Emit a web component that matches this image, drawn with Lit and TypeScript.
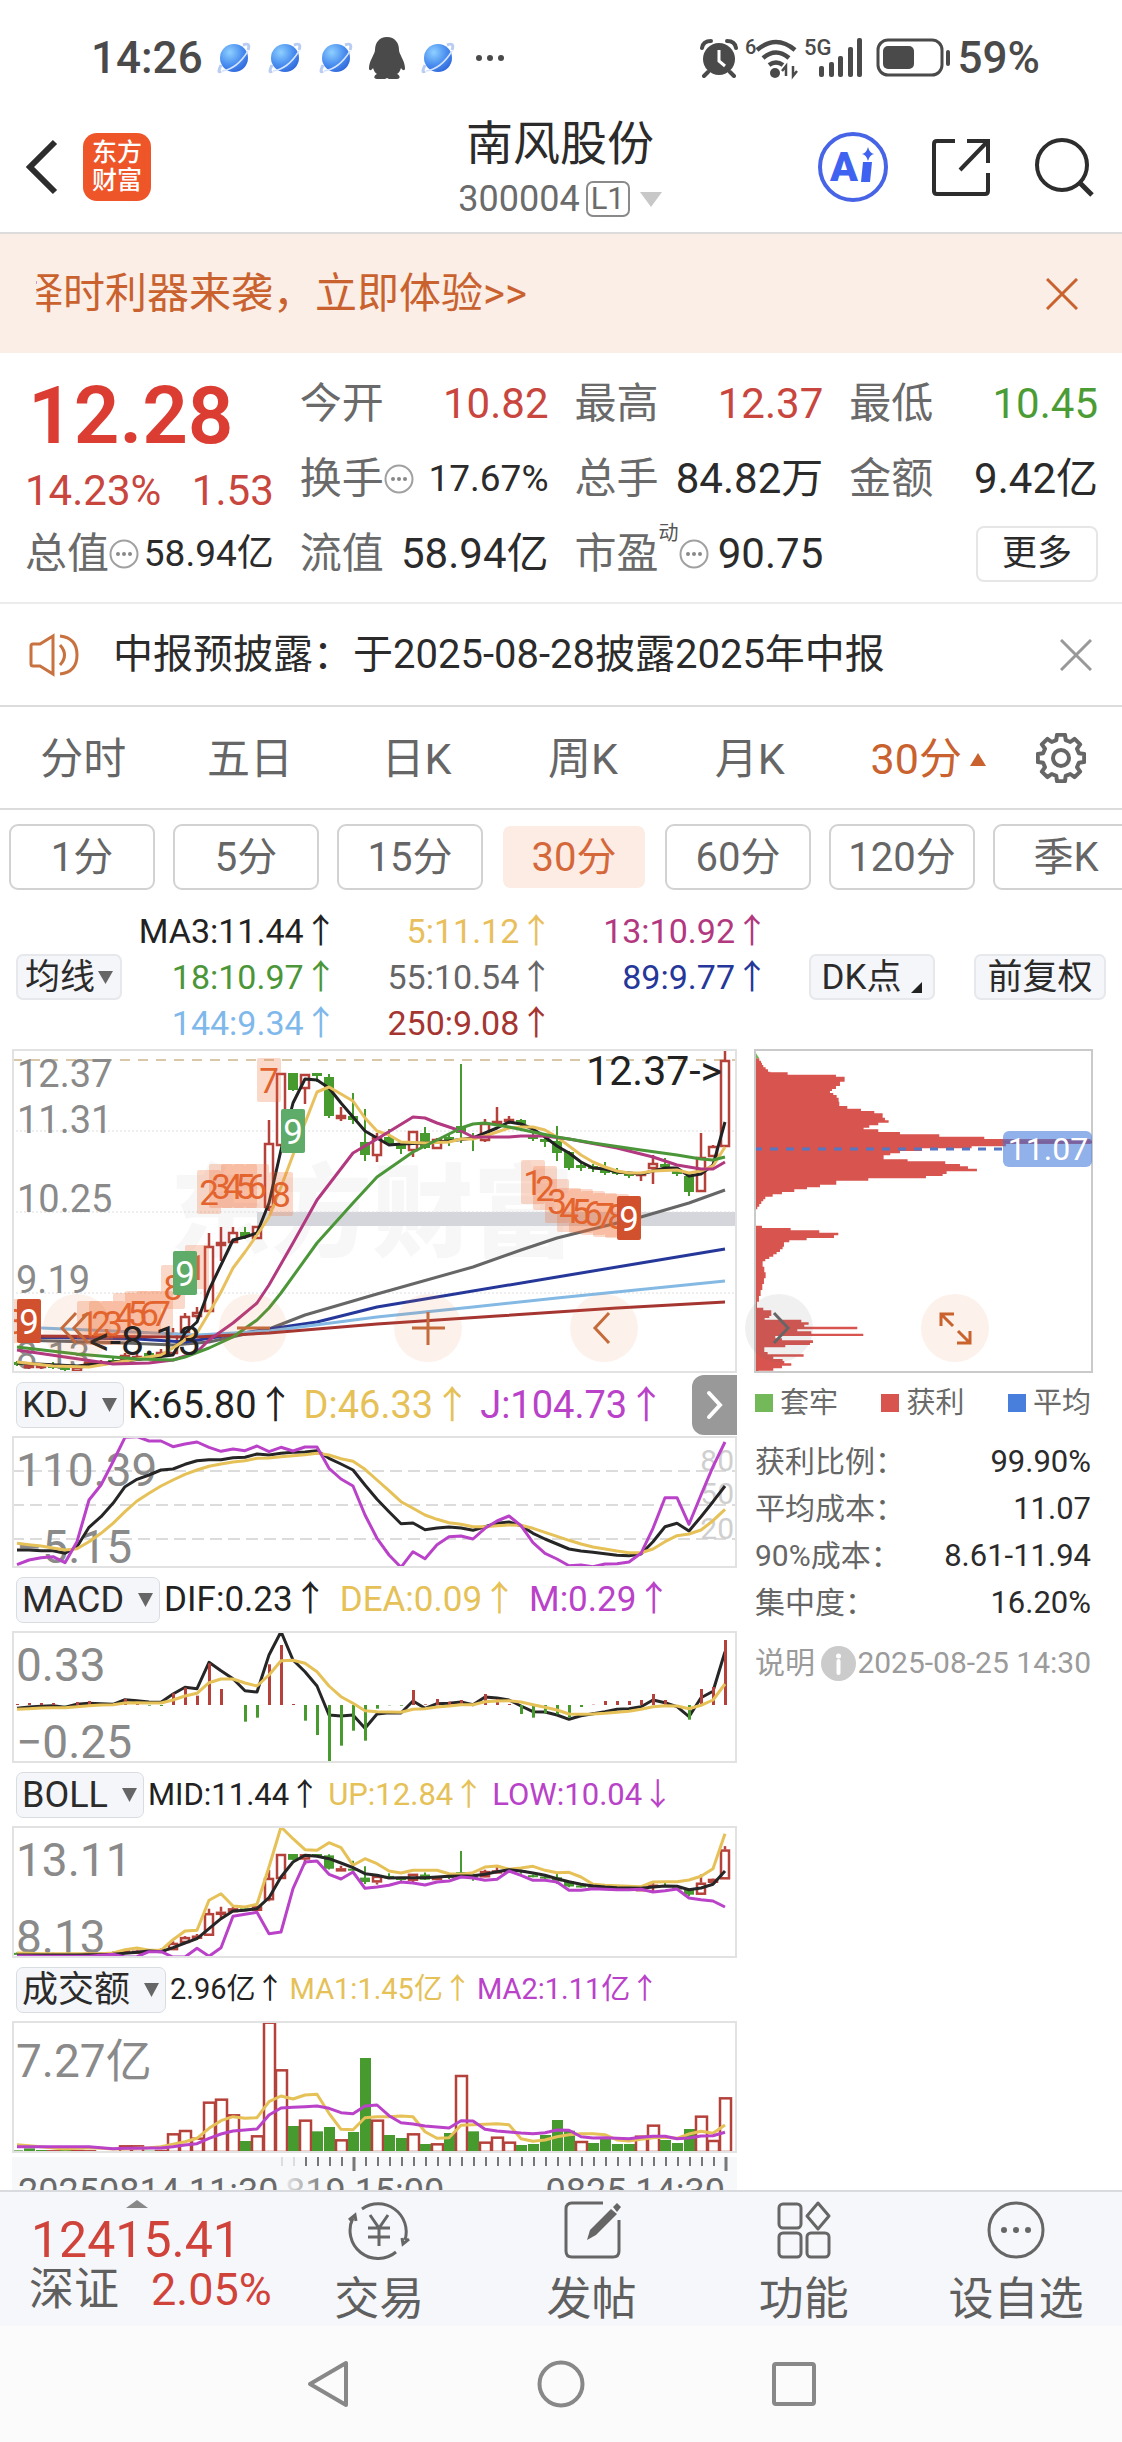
import { LitElement, html, svg, css } from "lit";
import { customElement, property } from "lit/decorators.js";
import { classMap } from "lit/directives/class-map.js";

/* ---------- market data, one entry per 30-minute bar ---------- */

type Candle = [kind: "r" | "g", high: number, top: number, bottom: number, low: number];

const STEP = 12;
const FIRST = 5;
const barX = (i: number) => FIRST + i * STEP;

const candles: Candle[] = [
  ["g", 312, 313, 316, 317], ["r", 315, 316, 319, 320], ["r", 315, 316, 319, 320], ["g", 313, 316, 319, 320],
  ["g", 317, 318, 321, 322], ["r", 316, 318, 323, 324], ["r", 311, 313, 316, 317], ["r", 311, 313, 316, 317],
  ["g", 309, 311, 313, 315], ["r", 304, 306, 311, 312], ["r", 304, 307, 311, 312], ["g", 303, 304, 308, 309],
  ["r", 300, 303, 307, 308], ["r", 279, 284, 305, 305], ["r", 264, 267, 284, 284], ["r", 258, 263, 268, 270],
  ["r", 184, 197, 263, 263], ["r", 178, 193, 197, 212], ["r", 178, 183, 194, 194], ["g", 178, 183, 188, 190],
  ["r", 177, 177, 190, 190], ["r", 71, 94, 159, 162], ["r", 24, 24, 97, 97], ["g", 24, 24, 41, 42],
  ["r", 25, 25, 40, 55], ["g", 24, 24, 27, 33], ["g", 25, 28, 67, 69], ["r", 58, 66, 70, 72],
  ["g", 44, 67, 71, 75], ["g", 60, 93, 106, 112], ["r", 84, 88, 107, 113], ["g", 80, 88, 95, 96],
  ["g", 93, 94, 100, 105], ["r", 82, 82, 102, 108], ["g", 78, 84, 99, 100], ["r", 89, 90, 100, 100],
  ["g", 86, 88, 91, 97], ["g", 15, 77, 84, 94], ["g", 84, 88, 90, 102], ["r", 70, 74, 92, 93],
  ["r", 58, 72, 75, 75], ["r", 67, 70, 73, 75], ["g", 70, 71, 75, 82], ["g", 84, 86, 90, 92],
  ["g", 88, 90, 93, 98], ["g", 77, 92, 104, 112], ["g", 102, 103, 119, 121], ["g", 112, 116, 119, 122],
  ["g", 115, 117, 120, 123], ["g", 113, 120, 124, 126], ["g", 119, 122, 125, 126], ["g", 123, 124, 127, 129],
  ["r", 123, 124, 126, 132], ["r", 106, 114, 120, 135], ["g", 109, 115, 118, 120], ["g", 120, 122, 125, 127],
  ["g", 125, 127, 143, 147], ["r", 84, 108, 143, 143], ["r", 96, 97, 108, 108], ["r", 1, 11, 98, 98],
];

/* Sparse series: bar index followed by its y coordinate. */
const maLines: { color: string; points: number[] }[] = [
  { color: "#666666", points: [0,291, 9,294, 13,296, 16,293, 21,280, 24,266, 30,245, 38,218, 42,201, 45,189, 50,174, 52,168, 56,154, 59,141] },
  { color: "#26379a", points: [0,288, 10,290, 14,293, 21,280, 25,273, 30,258, 36,246, 45,228, 52,214, 57,204, 59,200] },
  { color: "#84b9e4", points: [0,278, 8,282, 15,286, 21,282, 30,268, 38,258, 45,249, 59,232] },
  { color: "#a53531", points: [0,287, 15,288, 21,284, 30,275, 40,267, 50,259, 59,253] },
  { color: "#222222", points: [0,314, 5,317, 9,312, 13,306, 14,284, 15,273, 16,241, 17,216, 18,191, 19,188, 20,184, 21,154, 22,101, 23,54, 24,30, 25,31, 26,39, 27,54, 28,68, 29,82, 30,89, 31,96, 32,95, 34,94, 36,92, 38,89, 39,84, 40,79, 41,73, 42,75, 43,80, 44,88, 45,97, 46,104, 47,113, 48,119, 49,120, 50,123, 51,124, 52,125, 53,122, 54,119, 55,119, 56,127, 57,125, 58,116, 59,73] },
  { color: "#e8c05e", points: [0,313, 3,317, 6,318, 9,312, 12,306, 13,299, 14,291, 15,284, 16,264, 17,243, 18,219, 19,203, 20,186, 21,168, 22,138, 23,106, 24,74, 25,43, 26,38, 27,45, 28,52, 29,69, 30,82, 31,86, 32,93, 34,94, 36,93, 37,90, 38,90, 39,87, 40,83, 41,79, 42,78, 43,78, 44,81, 45,88, 46,97, 47,106, 48,113, 49,118, 50,122, 51,124, 52,124, 53,122, 55,121, 56,124, 57,122, 58,117, 59,98] },
  { color: "#b2387f", points: [0,301, 4,308, 8,315, 11,314, 13,311, 15,303, 16,291, 18,274, 20,254, 21,236, 23,194, 25,151, 28,104, 30,90, 33,68, 34,69, 35,74, 37,82, 38,88, 40,88, 41,88, 42,87, 44,87, 46,90, 50,99, 53,108, 55,116, 57,120, 58,120, 59,113] },
  { color: "#4b9638", points: [0,298, 5,305, 10,310, 13,311, 14,308, 16,299, 18,288, 20,271, 21,259, 22,244, 25,194, 28,154, 30,128, 33,103, 37,79, 38,75, 39,74, 41,78, 43,83, 45,88, 48,94, 52,101, 55,106, 57,110, 58,111, 59,108] },
];

/* Dense series are kept in thirds of a pixel, counted from each panel's own top value. */
const kdj = {
  top: 198,
  k: [540,540,542,542,550,530,472,440,400,350,328,315,300,297,283,272,269,269,263,262,252,255,250,247,246,242,265,282,300,345,388,425,461,459,479,474,471,474,481,470,460,456,467,490,507,522,537,543,547,551,556,557,552,515,470,460,483,440,395,348],
  d: [520,524,528,534,540,536,515,490,460,425,393,370,348,330,313,300,289,282,276,272,265,264,260,257,254,250,255,266,274,298,330,362,395,415,435,448,458,463,470,470,467,465,466,475,487,499,511,522,531,537,543,548,548,537,515,497,492,480,452,418],
  j: [584,570,563,560,578,515,390,345,275,202,200,213,213,230,222,216,232,244,237,242,228,245,232,243,231,231,295,327,348,435,505,555,592,545,566,524,500,498,507,475,453,438,467,518,550,567,587,585,590,582,581,576,550,475,383,383,463,375,290,216],
};

const macd = {
  top: 93,
  dif: [325,321,319,317,322,313,310,311,313,299,302,306,307,282,262,266,187,212,236,272,276,165,95,180,215,258,345,348,345,385,342,338,339,303,325,311,310,306,314,291,294,300,318,335,336,345,358,347,341,335,328,326,320,300,308,320,350,293,274,155],
  dea: [328,326,324,323,323,320,317,315,314,309,308,309,309,300,288,280,248,237,237,249,258,225,182,181,190,215,258,290,310,332,335,336,337,328,326,321,318,314,314,305,303,302,306,314,322,330,342,343,342,340,337,334,328,320,317,318,326,316,300,252],
  bars: [3,6,6,6,-1,9,12,3,1,18,10,-2,-3,35,52,28,125,48,0,-50,-38,122,180,3,-47,-90,-172,-122,-77,-107,-11,-1,-2,45,2,18,10,15,2,33,18,3,-27,-38,-25,-28,-38,-6,1,12,12,12,15,33,15,0,-44,48,54,195],
};

const boll = {
  top: 47,
  up: [428,429,430,430,430,430,430,430,428,418,413,420,420,388,362,360,270,250,287,290,282,170,50,85,118,120,97,112,165,145,160,182,188,180,180,180,190,192,187,170,167,177,173,168,180,187,186,200,222,225,226,228,229,215,214,214,209,198,175,70],
  mid: [434,434,434,434,434,434,433,433,432,429,426,422,424,412,398,385,355,325,302,300,295,262,200,155,135,138,145,158,172,190,195,203,202,202,202,200,198,197,196,192,184,178,182,188,195,205,214,222,227,230,232,233,234,230,227,228,238,233,222,182],
  low: [437,437,438,438,438,438,438,435,432,440,439,424,424,440,440,414,438,412,318,312,306,370,365,235,155,152,192,206,185,234,230,225,215,218,224,215,212,200,203,210,207,182,195,210,210,215,240,240,235,237,238,238,237,245,241,236,263,268,272,290],
};

const turnover = {
  top: 153,
  kinds: "gggrgrrggrrgrrrrrrrgrrrgrggrggrggrgrgrgrrrgggggrggggrrgggrrr",
  bars: [541,535,540,541,540,540,541,544,544,526,526,542,540,490,480,503,395,386,433,513,496,155,298,468,449,484,471,508,486,264,449,495,504,490,522,520,489,315,484,515,500,515,525,522,495,450,482,513,519,505,522,522,497,464,510,519,477,437,510,382],
  ma1: [524,527,530,534,537,535,533,535,537,536,535,533,530,523,515,505,475,452,440,445,443,395,378,387,375,373,430,478,479,443,440,440,438,440,485,505,503,466,464,463,461,464,506,514,510,500,494,491,491,494,510,513,508,503,502,505,492,484,490,465],
  ma2: [530,530,530,530,530,530,530,533,536,535,535,534,534,530,525,521,505,492,483,480,477,435,414,412,410,408,415,428,431,408,405,437,458,462,468,471,474,452,453,478,483,486,489,491,488,480,481,500,504,503,505,506,502,499,499,506,504,498,497,487],
};

/* Nine-turn counters: digit, left, top, style. */
const turns: [string, number, number, string][] = [
  ["8", -9, 250, "soft"], ["1", 65, 252, "soft"], ["2", 77, 252, "soft"], ["3", 89, 252, "soft"],
  ["4", 101, 244, "soft"], ["5", 113, 242, "soft"], ["6", 125, 242, "soft"], ["7", 137, 242, "soft"],
  ["8", 149, 216, "soft"], ["1", 173, 196, "soft"], ["9", 161, 202, "green"],
  ["2", 185, 121, "soft"], ["3", 197, 115, "soft"], ["4", 209, 115, "soft"], ["5", 221, 115, "soft"],
  ["6", 233, 115, "soft"], ["8", 257, 123, "soft"], ["7", 245, 9, "soft"], ["9", 269, 60, "green"],
  ["1", 509, 111, "soft"], ["2", 521, 117, "soft"], ["3", 533, 130, "soft"], ["4", 545, 139, "soft"],
  ["5", 557, 140, "soft"], ["6", 569, 142, "soft"], ["7", 581, 144, "soft"], ["8", 593, 145, "soft"],
  ["9", 605, 147, "red"], ["9", 5, 250, "red"],
];

/* Cost distribution, pairs of y and right edge in thirds of a pixel. */
const chips = [55,60, 62,65, 68,68, 75,72, 82,79, 88,86, 95,93, 97,145, 104,290, 110,316, 125,302, 138,290, 147,278, 153,272, 159,282, 165,292, 173,298, 185,300, 198,324, 206,365, 213,405, 220,430, 233,437, 241,448, 248,417, 256,390, 263,373, 268,417, 276,482, 283,600, 290,735, 297,1054, 312,800, 319,697, 325,548, 333,482, 340,453, 346,433, 358,505, 364,618, 372,662, 379,686, 386,713, 394,622, 402,610, 408,560, 415,387, 422,291, 434,242, 442,203, 448,165, 456,128, 463,100, 470,78, 478,72, 484,66, 492,60, 500,54, 508,48, 516,44, 557,68, 564,154, 571,240, 578,297, 586,284, 594,202, 601,150, 607,134, 620,130, 628,122, 636,112, 643,102, 650,90, 657,78, 664,70, 680,75, 697,79, 715,74, 732,69, 750,64, 768,59, 785,53, 803,72, 811,96, 828,90, 834,76, 839,186, 847,208, 854,195, 860,354, 868,174, 874,216, 881,372, 888,108, 895,128, 901,221, 909,212, 915,138, 922,75, 936,85, 943,193, 950,102, 957,130, 963,135, 970,156, 977,128, 985,102, 992,58, 999,44];

/* ---------- drawing helpers ---------- */

const sparse = (p: number[]) => {
  const out: string[] = [];
  for (let n = 0; n < p.length; n += 2) out.push(`${barX(p[n])},${p[n + 1]}`);
  return out.join(" ");
};
const dense = (v: number[], top: number) => v.map((y, i) => `${barX(i)},${((y - top) / 3).toFixed(1)}`).join(" ");
const chipPath = () => {
  let d = "M44 55";
  for (let n = 0; n < chips.length; n += 2) d += `V${chips[n]}H${chips[n + 1]}`;
  return d + "V1000H44Z";
};

const RED = "#b5413b";
const GREEN = "#469a2e";

const drawCandles = (scale = (y: number) => y, half = 5) =>
  candles.map(([kind, high, top, bottom, low], i) => {
    const x = barX(i);
    const t = scale(top);
    const b = scale(bottom);
    return kind === "g"
      ? svg`<path d="M${x} ${scale(high)}V${scale(low)}" stroke=${GREEN} stroke-width="2"/><rect x=${x - half} y=${t} width=${half * 2} height=${Math.max(b - t, 2)} fill=${GREEN}/>`
      : svg`<path d="M${x} ${scale(high)}V${t}M${x} ${b}V${scale(low)}" stroke=${RED} stroke-width="2.500"/><rect x=${x - half + 1} y=${t + 1} width=${half * 2 - 2} height=${Math.max(b - t - 2, 1)} fill="#fff" stroke=${RED} stroke-width="2.500"/>`;
  });

const line = (points: string, color: string, width = 3) =>
  svg`<polyline points=${points} fill="none" stroke=${color} stroke-width=${width} stroke-linejoin="round"/>`;

const gearPath = () => {
  const pts: string[] = [];
  for (let t = 0; t < 8; t++) {
    const mid = (t * Math.PI) / 4;
    for (const [off, r] of [[-0.26, 18.5], [-0.17, 23.5], [0.17, 23.5], [0.26, 18.5]]) {
      pts.push(`${(25 + r * Math.sin(mid + off)).toFixed(2)} ${(25 - r * Math.cos(mid + off)).toFixed(2)}`);
    }
  }
  return `M${pts.join("L")}Z`;
};

const sharedText = css`
  * { box-sizing: border-box; }
  :host { display: block; font-family: Roboto, "Noto Sans CJK SC", sans-serif; line-height: 1; color: #2b2b2b; }
  button { font: inherit; color: inherit; background: none; border: 0; padding: 0; margin: 0; cursor: pointer; }
  svg { display: block; }
`;

/* ---------- device status bar ---------- */

@customElement("status-bar")
class StatusBar extends LitElement {
  static styles = [sharedText, css`
    .bar { display: flex; justify-content: space-between; height: 116px; padding: 0 82px 0 91px; color: #4a4a4a; font-size: 44px; font-weight: 500; }
    .group { display: flex; align-items: center; gap: 5px; }
    .apps { display: flex; align-items: center; gap: 15px; margin-left: 8px; }
    .more { margin-left: 4px; }
    .signal { margin-right: 4px; }
  `];
  planet() {
    return html`<svg width="36" height="34" viewBox="0 0 36 34" aria-hidden="true">
      <defs><radialGradient id="p" cx=".35" cy=".3" r=".8"><stop offset="0" stop-color="#8fd0ff"/><stop offset=".55" stop-color="#4b90f0"/><stop offset="1" stop-color="#2c62d8"/></radialGradient></defs>
      <path d="M5 30Q1 33 5 24M27 4Q35 1 32 9" fill="none" stroke="#b9ccf2" stroke-width="3"/>
      <circle cx="18" cy="17" r="14" fill="url(#p)"/>
      <path d="M6 30Q21 28 32 10" fill="none" stroke="#d5e4ff" stroke-width="1.500"/>
    </svg>`;
  }
  render() {
    return html`<div class="bar">
      <div class="group">
        <span>14:26</span>
        <div class="apps">
          ${[0, 1, 2].map(() => this.planet())}
          <svg width="36" height="42" viewBox="0 0 36 42" aria-hidden="true"><path fill="#4a4a4a" d="M18 0c-8 0-12 6-12 13 0 4-6 11-6 18 0 3 2 3 4 0 1 3 2 5 4 6-3 1-4 5 0 5h8l2-1 2 1h8c4 0 3-4 0-5 2-1 3-3 4-6 2 3 4 3 4 0 0-7-6-14-6-18C30 6 26 0 18 0Z"/></svg>
          ${this.planet()}
          <svg class="more" width="30" height="8" viewBox="0 0 30 8" fill="#4a4a4a" aria-hidden="true"><circle cx="4" cy="4" r="3"/><circle cx="15" cy="4" r="3"/><circle cx="26" cy="4" r="3"/></svg>
        </div>
      </div>
      <div class="group">
        <svg width="38" height="40" viewBox="0 0 38 40" aria-hidden="true"><circle cx="19" cy="21" r="16" fill="#4a4a4a"/><path d="M2 10Q3 3 11 3M36 10Q35 3 27 3M8 34l-4 4M30 34l4 4" fill="none" stroke="#4a4a4a" stroke-width="4" stroke-linecap="round"/><path d="M19 12v11l6 5" fill="none" stroke="#fff" stroke-width="3"/></svg>
        <svg width="56" height="48" viewBox="0 -2 56 48" aria-hidden="true"><text x="2" y="18" font-size="20" font-weight="500" fill="#4a4a4a">6</text><g fill="none" stroke="#4a4a4a" stroke-width="4.500"><path d="M14 14Q33-2 52 14M20 22Q33 11 46 22M26 29Q33 24 40 29"/></g><circle cx="32" cy="37" r="5" fill="#4a4a4a"/><path d="M43 40V30l-4 5M50 30v10l4-5" fill="none" stroke="#4a4a4a" stroke-width="2.500"/></svg>
        <svg class="signal" width="62" height="48" viewBox="0 -2 62 48" fill="#4a4a4a" aria-hidden="true"><text x="0" y="19" font-size="22" font-weight="500">5G</text><rect x="15" y="30" width="5" height="11" rx="2"/><rect x="25" y="26" width="5" height="15" rx="2"/><rect x="34" y="20" width="5" height="21" rx="2"/><rect x="44" y="11" width="5" height="30" rx="2"/><rect x="53" y="2" width="5" height="39" rx="2"/></svg>
        <svg width="78" height="40" viewBox="0 0 78 40" aria-hidden="true"><rect x="3" y="2" width="64" height="35" rx="10" fill="none" stroke="#4a4a4a" stroke-width="3"/><rect x="8" y="8" width="31" height="23" rx="5" fill="#4a4a4a"/><path d="M73 14v12" stroke="#4a4a4a" stroke-width="4" stroke-linecap="round"/></svg>
        <span>59%</span>
      </div>
    </div>`;
  }
}

/* ---------- title bar ---------- */

@customElement("title-bar")
class TitleBar extends LitElement {
  static styles = [sharedText, css`
    .bar { display: grid; grid-template-columns: 1fr auto 1fr; grid-template-rows: 102px; align-items: center; height: 118px; padding: 0 28px 14px 26px; border-bottom: 2px solid #dcdcdc; }
    .side { display: flex; align-items: center; gap: 24px; }
    .end { justify-content: flex-end; gap: 43px; }
    .logo { display: grid; place-content: center; width: 68px; height: 68px; border-radius: 14px; background: #ee5529; color: #fff; font-size: 25px; line-height: 28px; font-weight: 500; }
    .title { text-align: center; }
    h1 { margin: 0; font-size: 47px; line-height: 64px; font-weight: 400; }
    .code { display: flex; align-items: center; justify-content: center; gap: 6px; height: 46px; font-size: 36px; color: #6b6b6b; }
    .level { border: 2px solid #8a8a8a; border-radius: 7px; font-size: 31px; line-height: 32px; padding: 0 3px; }
    .tri { margin-left: 4px; }
  `];
  render() {
    return html`<header class="bar">
      <div class="side">
        <button aria-label="返回"><svg width="33" height="56" viewBox="0 0 33 56"><path d="M29 3 4 28l25 25" fill="none" stroke="#2d2d2d" stroke-width="6"/></svg></button>
        <div class="logo"><span>东方</span><span>财富</span></div>
      </div>
      <div class="title">
        <h1>南风股份</h1>
        <div class="code"><span>300004</span><span class="level">L1</span><svg class="tri" width="22" height="15" viewBox="0 0 22 15" aria-hidden="true"><path d="M0 0h22L11 15Z" fill="#c8c8c8"/></svg></div>
      </div>
      <div class="side end">
        <button aria-label="智能助手"><svg width="70" height="72" viewBox="0 0 70 72"><circle cx="35" cy="36" r="33" fill="none" stroke="#4763e6" stroke-width="4"/><text x="12" y="50" font-size="41" font-weight="900" fill="#3f63f0">A</text><path d="M45 31h9l-2 20h-9Z" fill="#3f63f0"/><path d="M50 16q1.500 6 6 7-4.500 1-6 7-1.500-6-6-7 4.500-1 6-7Z" fill="#3f63f0"/></svg></button>
        <button aria-label="分享"><svg width="60" height="60" viewBox="0 0 60 60"><path d="M24 4H6Q3 4 3 7v47q0 3 3 3h48q3 0 3-3V36M36 4h21v22M57 4 29 33" fill="none" stroke="#2d2d2d" stroke-width="4"/></svg></button>
        <button aria-label="搜索"><svg width="60" height="60" viewBox="0 0 60 60"><circle cx="28" cy="28" r="25" fill="none" stroke="#2d2d2d" stroke-width="4"/><path d="m46 46 12 12" stroke="#2d2d2d" stroke-width="5"/></svg></button>
      </div>
    </header>`;
  }
}

/* ---------- quote summary ---------- */

@customElement("quote-panel")
class QuotePanel extends LitElement {
  static styles = [sharedText, css`
    .grid { display: grid; grid-template-columns: repeat(4, 1fr); grid-template-rows: repeat(3, 75px); column-gap: 26px; padding: 13px 24px 11px 25px; border-bottom: 2px solid #ececec; font-size: 42px; }
    .lead { grid-row: span 2; }
    .price { height: 100px; display: flex; align-items: center; font-size: 80px; font-weight: 600; color: #db3d33; padding-left: 3px; }
    .change { height: 50px; display: flex; align-items: center; justify-content: space-between; color: #c8463e; }
    .cell { display: flex; align-items: center; justify-content: space-between; white-space: nowrap; }
    .name { display: flex; align-items: center; color: #6a6a6a; }
    .red { color: #c8463e; }
    .green { color: #4b9c35; }
    .small { font-size: 37px; }
    sup { font-size: 20px; align-self: flex-start; line-height: 16px; margin-top: -8px; color: #555; }
    .more { margin-left: auto; width: 122px; height: 56px; border: 2px solid #e6e6e6; border-radius: 8px; font-size: 35px; }
  `];
  hint() {
    return html`<svg width="30" height="30" viewBox="0 0 30 30" aria-hidden="true"><circle cx="15" cy="15" r="13.500" fill="none" stroke="#a0a0a0" stroke-width="2"/><g fill="#888"><circle cx="9" cy="15" r="2"/><circle cx="15" cy="15" r="2"/><circle cx="21" cy="15" r="2"/></g></svg>`;
  }
  cell(name: string, value: string, tone = "", hinted = false, sup = "") {
    return html`<div class="cell"><span class="name">${name}${sup ? html`<sup>${sup}</sup>` : ""}${hinted ? this.hint() : ""}</span><span class=${tone}>${value}</span></div>`;
  }
  render() {
    return html`<section class="grid">
      <div class="lead"><div class="price">12.28</div><div class="change"><span>14.23%</span><span>1.53</span></div></div>
      ${this.cell("今开", "10.82", "red")}${this.cell("最高", "12.37", "red")}${this.cell("最低", "10.45", "green")}
      ${this.cell("换手", "17.67%", "small", true)}${this.cell("总手", "84.82万")}${this.cell("金额", "9.42亿")}
      ${this.cell("总值", "58.94亿", "small", true)}${this.cell("流值", "58.94亿")}${this.cell("市盈", "90.75", "", true, "动")}
      <div class="cell"><button class="more">更多</button></div>
    </section>`;
  }
}

/* ---------- indicator header ---------- */

@customElement("indicator-head")
class IndicatorHead extends LitElement {
  @property() name = "";
  @property() size = "l";
  @property({ attribute: false }) values: string[] = [];
  @property({ type: Boolean }) grip = false;
  static styles = [sharedText, css`
    .head { display: flex; align-items: center; height: 63px; padding-left: 4px; white-space: nowrap; }
    .pick { display: flex; align-items: center; gap: 14px; height: 46px; padding: 0 6px 0 5px; margin-right: 4px; border: 1px solid #d9dde2; border-radius: 7px; background: #f5f6f9; font-size: 36px; }
    .values { display: flex; gap: 14px; }
    .l { font-size: 38px; gap: 9px; }
    .m { font-size: 35px; gap: 12px; }
    .s { font-size: 31px; gap: 8px; }
    .xs { font-size: 29px; gap: 5px; }
    .v0 { color: #222; }
    .v1 { color: #e5c157; }
    .v2 { color: #b942c9; }
    .grip { display: grid; place-items: center; margin-left: auto; width: 45px; height: 60px; background: #999; border-radius: 12px 0 0 12px; }
  `];
  render() {
    return html`<div class="head">
      <button class="pick" aria-haspopup="listbox">${this.name}<svg width="15" height="14" viewBox="0 0 15 14" aria-hidden="true"><path d="M0 0h15L7.500 14Z" fill="#666"/></svg></button>
      <div class=${`values ${this.size}`}>${this.values.map((v, i) => html`<span class=${`v${i}`}>${v}</span>`)}</div>
      ${this.grip ? html`<button class="grip" aria-label="收起筹码"><svg width="20" height="30" viewBox="0 0 20 30"><path d="m4 3 11 12L4 27" fill="none" stroke="#fff" stroke-width="4" stroke-linecap="round"/></svg></button>` : ""}
    </div>`;
  }
}

/* ---------- charts ---------- */

@customElement("chart-board")
class ChartBoard extends LitElement {
  static styles = [sharedText, css`
    .board { position: relative; display: grid; grid-template-columns: 725fr 339fr; column-gap: 17px; padding: 0 29px 0 12px; align-items: start; }
    svg.plot { width: 100%; height: auto; background: #fff; }
    .axis { width: 100%; height: auto; margin-top: 4px; background: #f7f8fa; }
    .tools { position: absolute; left: 43px; right: 133px; top: 245px; display: flex; justify-content: space-between; pointer-events: none; }
    .tool { width: 68px; height: 68px; border-radius: 50%; background: rgba(226, 120, 60, 0.1); pointer-events: auto; }
    .grey { background: rgba(110, 110, 110, 0.1); }
    .legend { display: flex; justify-content: space-between; align-items: center; height: 60px; padding: 0 2px 0 1px; font-size: 29px; color: #6a6a6a; }
    .legend span { display: flex; align-items: center; gap: 7px; }
    .sw { width: 18px; height: 18px; }
    .lost { background: #73b95a; }
    .won { background: #d7544f; }
    .avg { background: #487fdc; }
    dl { margin: 5px 2px 0 1px; font-size: 30px; }
    .row { display: flex; justify-content: space-between; align-items: center; height: 47px; }
    dt { color: #666; }
    dd { margin: 0; font-size: 31px; }
    .note { display: flex; justify-content: space-between; align-items: center; height: 74px; margin: 0 2px 0 1px; font-size: 30px; color: #9b9b9b; white-space: nowrap; }
    .about { display: flex; align-items: center; gap: 6px; }
  `];
  price() {
    const style: Record<string, [string, string]> = { soft: ["rgba(238,110,50,.26)", "#e2632d"], green: ["#5fab69", "#fff"], red: ["#d1502d", "#fff"] };
    return html`<svg class="plot" viewBox="0 0 725 324" role="img" aria-label="30分钟K线">
      <text x="158" y="200" font-size="101" font-weight="900" fill="#f7f7f8">东方财富</text>
      <rect x="245" y="163" width="480" height="14" fill="#d5d6dc"/>
      <path d="M0 11h725" stroke="#d8c8a8" stroke-width="2" stroke-dasharray="10 8"/>
      <path d="M0 82h725M0 163h725M0 244h725" stroke="#ddd" stroke-width="1" stroke-dasharray="2 2"/>
      <g font-size="38" fill="#8a8a8a"><text x="5" y="38">12.37</text><text x="5" y="84">11.31</text><text x="5" y="163">10.25</text><text x="4" y="244">9.19</text><text x="4" y="320">8.13</text></g>
      ${drawCandles()}
      ${maLines.map((m) => line(sparse(m.points), m.color))}
      ${turns.map(([n, x, y, k]) => svg`<rect x=${x} y=${y} width="24" height="44" rx="2" fill=${style[k][0]}/><text x=${x + 12} y=${y + 35} font-size="35" text-anchor="middle" fill=${style[k][1]}>${n}</text>`)}
      <text x="189" y="306" font-size="41" text-anchor="end" fill="#222">&lt;-8.13</text>
      <text x="710" y="36" font-size="41" text-anchor="end" fill="#222">12.37-&gt;</text>
      <rect x="1" y="1" width="723" height="322" fill="none" stroke="#e2e2e2" stroke-width="2"/>
    </svg>`;
  }
  panel(label: string, body: unknown) {
    return html`<svg class="plot" viewBox="0 0 725 132" role="img" aria-label=${label}>${body}<rect x="1" y="1" width="723" height="130" fill="none" stroke="#e2e2e2" stroke-width="2"/></svg>`;
  }
  limits(high: string, low: string, highY = 50) {
    return svg`<g font-size="46" fill="#8a8a8a"><text x="4" y=${highY}>${high}</text>${low ? svg`<text x="4" y="127">${low}</text>` : ""}</g>`;
  }
  render() {
    const small = (y: number) => 0.342 * y + 19.8;
    return html`<div class="board">
      <div>
        ${this.price()}
        <indicator-head name="KDJ" size="l" grip .values=${["K:65.80↑", "D:46.33↑", "J:104.73↑"]}></indicator-head>
        ${this.panel("KDJ", svg`
          <path d="M0 35h725M0 69h725M0 103h725" stroke="#dcdcdc" stroke-width="2" stroke-dasharray="12 6"/>
          ${this.limits("110.39", "−5.15")}
          <g font-size="30" fill="#cfcfcf" text-anchor="end"><text x="722" y="35">80</text><text x="722" y="68">50</text><text x="722" y="103">20</text></g>
          ${line(dense(kdj.k, kdj.top), "#262626")}${line(dense(kdj.d, kdj.top), "#e5c157")}${line(dense(kdj.j, kdj.top), "#b942c9")}`)}
        <indicator-head name="MACD" size="m" .values=${["DIF:0.23↑", "DEA:0.09↑", "M:0.29↑"]}></indicator-head>
        ${this.panel("MACD", svg`
          ${this.limits("0.33", "−0.25")}
          ${line(dense(macd.dif, macd.top), "#262626")}
          ${macd.bars.map((v, i) => svg`<rect x=${barX(i) - 1} y=${v > 0 ? 74 - v / 3 : 74} width="3" height=${Math.abs(v) / 3} fill=${v > 0 ? RED : GREEN}/>`)}
          ${line(dense(macd.dea, macd.top), "#e5c157")}`)}
        <indicator-head name="BOLL" size="s" .values=${["MID:11.44↑", "UP:12.84↑", "LOW:10.04↓"]}></indicator-head>
        ${this.panel("BOLL", svg`
          ${this.limits("13.11", "8.13")}
          ${drawCandles(small)}
          ${line(dense(boll.up, boll.top), "#e5c157")}${line(dense(boll.mid, boll.top), "#262626")}${line(dense(boll.low, boll.top), "#b942c9")}`)}
        <indicator-head name="成交额" size="xs" .values=${["2.96亿↑", "MA1:1.45亿↑", "MA2:1.11亿↑"]}></indicator-head>
        ${this.panel("成交额", svg`
          ${this.limits("7.27亿", "", 56)}
          ${turnover.bars.map((v, i) => {
            const y = (v - turnover.top) / 3;
            return turnover.kinds[i] === "r"
              ? svg`<rect x=${barX(i) - 5} y=${y + 1} width="11" height=${Math.max(130 - y, 1)} fill="#fff" stroke=${RED} stroke-width="2.500"/>`
              : svg`<rect x=${barX(i) - 5} y=${y} width="11" height=${131 - y} fill=${GREEN}/>`;
          })}
          ${line(dense(turnover.ma1, turnover.top), "#e5c157")}${line(dense(turnover.ma2, turnover.top), "#b942c9")}`)}
        <svg class="axis" viewBox="0 0 725 33" role="img" aria-label="时间轴">
          <defs><linearGradient id="fade" x1="273" x2="318" y1="0" y2="0" gradientUnits="userSpaceOnUse"><stop offset="0" stop-color="#e8e8e8"/><stop offset="1" stop-color="#6a6a6a"/></linearGradient></defs>
          ${Array.from({ length: 38 }, (_, n) => n + 22).map((i) => svg`<path d="M${barX(i) + 1} 0V${i === 28 || i === 59 ? 14 : 9}" stroke=${i < 24 ? "#ddd" : "#777"} stroke-width=${i === 28 || i === 59 ? 3 : 2}/>`)}
          <g font-size="36" fill="#6a6a6a"><text x="6" y="47">20250814 11:30</text><text x="273" y="47" fill="url(#fade)">819 15:00</text><text x="713" y="47" text-anchor="end">0825 14:30</text></g>
        </svg>
      </div>
      <div>
        <svg class="plot" viewBox="0 0 339 324" role="img" aria-label="筹码分布">
          <g transform="translate(-14.700 -9) scale(.3333)"><path d=${chipPath()} fill="#d7544f"/><path d="M44 30v25h16Z" fill="#73b95a"/></g>
          <path d="M0 100h249" stroke="#5577c4" stroke-width="3" stroke-dasharray="8 8"/>
          <rect x="1" y="1" width="337" height="322" fill="none" stroke="#cacaca" stroke-width="2"/>
          <rect x="249" y="82" width="89" height="36" rx="6" fill="rgba(70,125,220,.6)"/>
          <path d="M249 93h89" stroke="#7a62a0" stroke-width="3"/>
          <text x="294" y="111" font-size="32" text-anchor="middle" fill="#fff">11.07</text>
        </svg>
        <div class="legend"><span><i class="sw lost"></i>套牢</span><span><i class="sw won"></i>获利</span><span><i class="sw avg"></i>平均</span></div>
        <dl>
          <div class="row"><dt>获利比例：</dt><dd>99.90%</dd></div>
          <div class="row"><dt>平均成本：</dt><dd>11.07</dd></div>
          <div class="row"><dt>90%成本：</dt><dd>8.61-11.94</dd></div>
          <div class="row"><dt>集中度：</dt><dd>16.20%</dd></div>
        </dl>
        <div class="note"><span class="about">说明<svg width="35" height="35" viewBox="0 0 35 35" aria-hidden="true"><circle cx="17.500" cy="17.500" r="17.500" fill="#cbcbcb"/><circle cx="17.500" cy="10" r="2.500" fill="#fff"/><path d="M17.500 15v12" stroke="#fff" stroke-width="4" stroke-linecap="round"/></svg></span><span>2025-08-25 14:30</span></div>
      </div>
      <div class="tools">
        ${[
          ["更早", "M33 19 19 34l14 15M45 19 31 34l14 15", "#c56a3a", ""],
          ["缩小", "M18 34h33", "#c56a3a", ""],
          ["放大", "M18 34h33M34 18v33", "#c56a3a", ""],
          ["向左", "M39 19 25 34l14 15", "#c56a3a", ""],
          ["向右", "M29 19 43 34 29 49", "#666", "grey"],
          ["全屏", "M20 32V20h13M20 20l12 12M49 37v12H36M49 49 37 37", "#c9622c", ""],
        ].map(([label, d, color, tone]) => html`<button class=${classMap({ tool: true, grey: tone === "grey" })} aria-label=${label}><svg width="68" height="68" viewBox="0 0 68 68"><path d=${d} fill="none" stroke=${color} stroke-width="3"/></svg></button>`)}
      </div>
    </div>`;
  }
}

/* ---------- page ---------- */

@customElement("app-root")
class AppRoot extends LitElement {
  static styles = [sharedText, css`
    :host { background: #fff; overflow-x: hidden; }
    .banner { display: flex; align-items: center; justify-content: space-between; height: 119px; padding: 0 44px 0 36px; background: #fbeee6; color: #c9622f; font-size: 42px; }
    .promo { display: flex; line-height: 60px; color: inherit; text-decoration: none; }
    .cut { display: flex; justify-content: flex-end; width: 27px; overflow: hidden; }
    .notice { display: flex; align-items: center; gap: 33px; height: 103px; padding: 0 30px 0 28px; border-bottom: 2px solid #dcdcdc; font-size: 40px; }
    .notice p { margin: 0; flex: 1; white-space: nowrap; }
    .tabs { display: flex; height: 103px; border-bottom: 2px solid #dcdcdc; }
    .tab { position: relative; flex: 166; height: 100%; padding-top: 4px; font-size: 43px; color: #666; }
    .tab.on { color: #c9622f; }
    .up { position: absolute; left: calc(50% + 54px); top: 46px; }
    .gear { flex: 122; display: grid; place-items: center; }
    .periods { display: flex; gap: 18px; padding: 14px 0 0 9px; overflow: hidden; }
    .period { flex: none; width: 146px; height: 66px; padding-top: 2px; border: 2px solid #d2d2d2; border-radius: 9px; font-size: 40px; color: #666; }
    .period.on { border-color: #fff; background: #fcece4; background-clip: padding-box; color: #d5683a; }
    .averages { display: flex; align-items: center; padding: 18px 16px 3px; font-size: 34px; }
    .ma { flex: 1; display: grid; grid-template-columns: repeat(3, 1fr); grid-auto-rows: 46px; align-items: center; justify-items: end; margin-right: 40px; }
    .chip { display: flex; align-items: center; justify-content: center; height: 46px; border: 2px solid #e6e8ec; border-radius: 7px; background: #f5f6f9; font-size: 35px; white-space: nowrap; }
    .line { width: 106px; gap: 3px; }
    .dk { width: 126px; gap: 10px; margin-right: 39px; }
    .dk svg { align-self: flex-end; margin-bottom: 5px; }
    .adj { width: 132px; }
    .c0 { color: #222; } .c1 { color: #e9bf5e; } .c2 { color: #b2387f; } .c3 { color: #4b9638; }
    .c4 { color: #666; } .c5 { color: #26379a; } .c6 { color: #7fb8ea; } .c7 { color: #a53531; }
    .dock { display: grid; grid-template-columns: 273fr repeat(4, 212fr); height: 136px; border-top: 2px solid #d9dadd; background: #f6f7fa; }
    .index { position: relative; align-self: start; padding: 24px 0 0 29px; color: #d0433a; text-align: left; }
    .arrow { position: absolute; left: 126px; top: 8px; }
    .index strong { display: block; font-weight: 400; font-size: 50px; line-height: 48px; padding-left: 2px; }
    .market { display: flex; gap: 32px; font-size: 45px; line-height: 52px; }
    .market b { font-weight: 400; color: #5f5f5f; }
    .act { display: flex; flex-direction: column; align-items: center; gap: 17px; padding-top: 8px; font-size: 45px; color: #5f5f5f; }
    .system { display: flex; justify-content: center; height: 116px; background: #fbfbfb; }
    .key { width: 233px; display: grid; place-items: center; }
  `];
  close(color: string) {
    return html`<svg width="32" height="32" viewBox="0 0 32 32"><path d="m1 1 30 30M31 1 1 31" stroke=${color} stroke-width="3"/></svg>`;
  }
  act(label: string, icon: unknown) {
    return html`<button class="act"><svg width="66" height="60" viewBox="0 0 66 60" fill="none" stroke="#666" stroke-width="3" aria-hidden="true">${icon}</svg>${label}</button>`;
  }
  render() {
    return html`
      <status-bar></status-bar>
      <title-bar></title-bar>
      <div class="banner"><a class="promo" href="#promo"><span class="cut">择</span><span>时利器来袭，立即体验&gt;&gt;</span></a><button aria-label="关闭">${this.close("#c9622f")}</button></div>
      <quote-panel></quote-panel>
      <div class="notice">
        <svg width="52" height="44" viewBox="0 0 52 44" fill="none" stroke="#c87240" stroke-width="3" aria-hidden="true"><path d="M25 3 12 11H5q-2 0-2 2v18q0 2 2 2h7l13 8ZM32 12q9 10 0 20M32 3q17 2 17 19T32 41"/></svg>
        <p>中报预披露：于2025-08-28披露2025年中报</p>
        <button aria-label="关闭">${this.close("#999")}</button>
      </div>
      <nav class="tabs">
        ${["分时", "五日", "日K", "周K", "月K"].map((t) => html`<button class="tab">${t}</button>`)}
        <button class="tab on">30分<svg class="up" width="16" height="13" viewBox="0 0 16 13" aria-hidden="true"><path d="M0 13h16L8 0Z" fill="#c9622f"/></svg></button>
        <button class="gear" aria-label="设置"><svg width="50" height="50" viewBox="0 0 50 50" fill="none" stroke="#666" stroke-width="4" stroke-linejoin="round"><path d=${gearPath()}/><circle cx="25" cy="25" r="8"/></svg></button>
      </nav>
      <div class="periods">
        ${["1分", "5分", "15分", "30分", "60分", "120分", "季K"].map((p) => html`<button class=${classMap({ period: true, on: p === "30分" })}>${p}</button>`)}
      </div>
      <div class="averages">
        <button class="chip line">均线<svg width="15" height="13" viewBox="0 0 15 13" aria-hidden="true"><path d="M0 0h15L7.500 13Z" fill="#666"/></svg></button>
        <div class="ma">
          ${["MA3:11.44↑", "5:11.12↑", "13:10.92↑", "18:10.97↑", "55:10.54↑", "89:9.77↑", "144:9.34↑", "250:9.08↑"].map((t, i) => html`<span class=${`c${i}`}>${t}</span>`)}
        </div>
        <button class="chip dk">DK点<svg width="11" height="11" viewBox="0 0 11 11" aria-hidden="true"><path d="M11 0v11H0Z" fill="#222"/></svg></button>
        <button class="chip adj">前复权</button>
      </div>
      <chart-board></chart-board>
      <footer>
        <div class="dock">
          <button class="index"><svg class="arrow" width="22" height="8" viewBox="0 0 22 8" aria-hidden="true"><path d="M0 8 11 0l11 8Z" fill="#888"/></svg><strong>12415.41</strong><span class="market"><b>深证</b>2.05%</span></button>
          ${this.act("交易", svg`<path d="M16 9A28 28 0 0 1 59 40M50 52A28 28 0 0 1 7 18M3 20l6-5 1 6M63 39l-6 5-1-6" /><path d="m24 15 9 13 9-13M22 28h22M22 37h22M33 28v18"/>`)}
          ${this.act("发帖", svg`<path d="M44 3H13q-6 0-6 6v42q0 6 6 6h41q6 0 6-6V20"/><path d="M28 40 31 30 52 9l6 5-21 21Z" fill="#666" stroke="none"/><path d="m54 7 4-4 4 4-4 5Z" fill="#666" stroke="none"/>`)}
          ${this.act("功能", svg`<rect x="8" y="4" width="22" height="24" rx="4"/><rect x="8" y="33" width="22" height="24" rx="4"/><rect x="36" y="33" width="22" height="24" rx="4"/><path d="m47 3 11 13-11 13-11-13Z" stroke-linejoin="round"/>`)}
          ${this.act("设自选", svg`<circle cx="33" cy="30" r="27"/><g fill="#666" stroke="none"><circle cx="21" cy="30" r="3"/><circle cx="33" cy="30" r="3"/><circle cx="45" cy="30" r="3"/></g>`)}
        </div>
        <div class="system">
          <button class="key" aria-label="返回"><svg width="44" height="50" viewBox="0 0 44 50"><path d="M40 4v42L4 25Z" fill="none" stroke="#888" stroke-width="4" stroke-linejoin="round"/></svg></button>
          <button class="key" aria-label="主屏幕"><svg width="50" height="50" viewBox="0 0 50 50"><circle cx="25" cy="25" r="21.500" fill="none" stroke="#888" stroke-width="4"/></svg></button>
          <button class="key" aria-label="最近任务"><svg width="44" height="44" viewBox="0 0 44 44"><rect x="2" y="2" width="40" height="40" rx="2" fill="none" stroke="#888" stroke-width="4"/></svg></button>
        </div>
      </footer>`;
  }
}
